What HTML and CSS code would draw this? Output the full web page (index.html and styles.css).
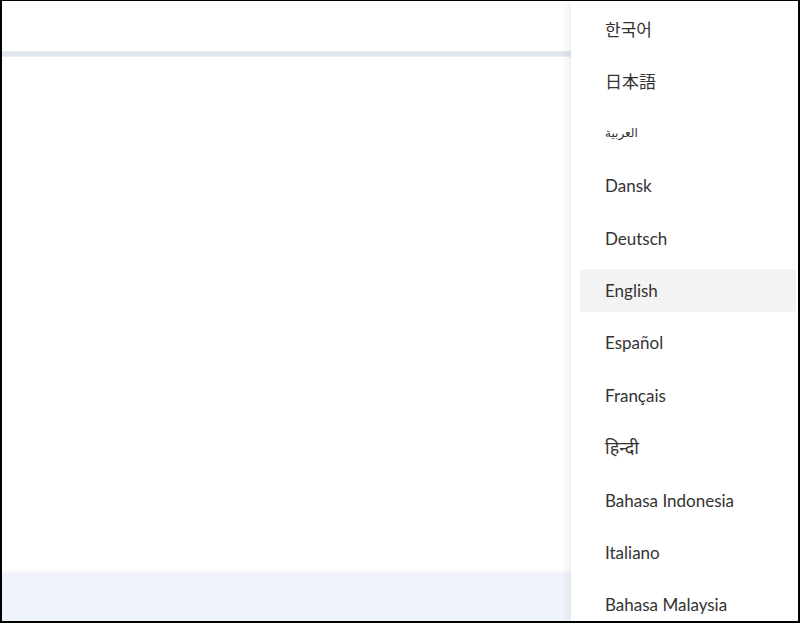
FILE: index.html
```html
<!Doctype html>
<html>
<head>
    <meta charset="UTF-8">
    <meta name="viewport" content="width=device-width, initial-scale=1.0">
    <title>Language</title>
    <link rel="stylesheet" href="styles.css">
</head>
<body>
<div class="frame">
    <div class="header"></div>
    <div class="band"></div>
    <div class="content"></div>
    <div class="footer"></div>

    <ul class="lang">
        <li class="ko">한국어</li>
        <li class="ja">日本語</li>
        <li class="ar">العربية</li>
        <li>Dansk</li>
        <li>Deutsch</li>
        <li class="on">English</li>
        <li>Español</li>
        <li>Français</li>
        <li class="hi">हिन्दी</li>
        <li>Bahasa Indonesia</li>
        <li>Italiano</li>
        <li>Bahasa Malaysia</li>
    </ul>
</div>
</body>
</html>
```

FILE: styles.css
```css
html,body,ul,li{
    margin: 0;
    padding: 0;
    list-style: none;
}
body{
    width: 800px;height: 623px;
    overflow: hidden;
    font-family: Lato, "Noto Sans", sans-serif;
}
.frame{
    width: 800px;height: 623px;
    box-sizing: border-box;
    border: 2px solid #000;
    border-top-width: 1px;
    position: relative;
    display: flex;
    flex-direction: column;
    overflow: hidden;
    background: #fff;
}
.header{
    height: 50px;
    background: #fff;
}
.band{
    height: 6px;
    background: linear-gradient(#e6eaf2, #dde3ed 60%, #eef1f6);
}
.content{
    flex: 1;
    background: #fff;
}
.footer{
    height: 47px;
    background: #eef3fc;
    box-shadow: 0 -2px 3px rgba(40,60,110,0.08);
}
.lang{
    position: absolute;
    top: 0;bottom: 0;
    left: 569px;right: 0;
    padding: 6px 2px 0 9px;
    background: #fff;
    box-shadow: -3px 0 8px rgba(0,0,0,0.07);
}
.lang li{
    height: 43px;
    margin-bottom: 9.4px;
    padding-left: 25px;
    line-height: 43px;
    font-size: 17px;
    color: #333;
    border-radius: 3px;
    white-space: nowrap;
    text-align: left;
}
.lang li.on{
    background: #f3f3f3;
}
.lang .ko{
    font-family: "Noto Sans CJK KR", sans-serif;
    font-size: 17px;
}
.lang .ja{
    font-family: "Noto Sans CJK JP", sans-serif;
    font-size: 17px;
}
.lang .ar{
    font-family: "DejaVu Sans", sans-serif;
    font-size: 12px;
}
.lang .hi{
    font-family: "Noto Sans", "Lohit Devanagari", sans-serif;
    font-size: 18px;
}
```
